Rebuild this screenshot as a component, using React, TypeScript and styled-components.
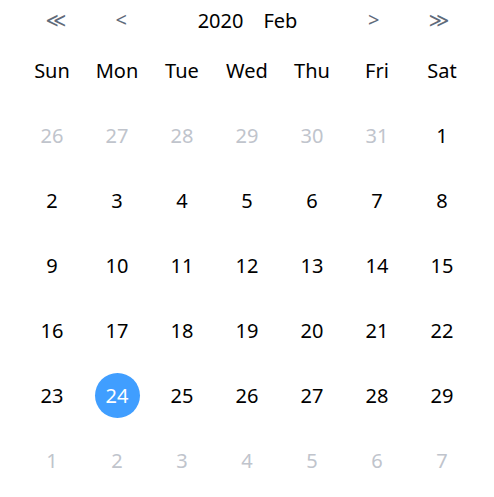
import React from "react";
import styled, { createGlobalStyle } from "styled-components";

const Global = createGlobalStyle`
  html, body { margin: 0; padding: 0; background: #fff; }
  body { font-family: "Noto Sans", "Open Sans", sans-serif; }
`;

const Calendar = styled.div`
  width: 455px;
  margin: 0 auto;
  padding-top: 2px;
`;

const Header = styled.div`
  height: 36px;
  display: flex;
  align-items: center;
  justify-content: space-between;
  padding: 0 25px 0 26px;
`;

const NavGroup = styled.div`
  display: flex;
  align-items: center;
  gap: 49px;
`;

const NavButton = styled.span`
  font-family: "Noto Sans", "DejaVu Sans", sans-serif;
  font-size: 20px;
  color: #5f6b7a;
  cursor: pointer;
  line-height: 1;
`;

const Title = styled.div`
  font-size: 20px;
  color: #000;
  display: flex;
  gap: 20px;
`;

const Grid = styled.div`
  display: grid;
  grid-template-columns: repeat(7, 65px);
  grid-auto-rows: 65px;
`;

const WeekDay = styled.div`
  display: flex;
  align-items: center;
  justify-content: center;
  font-size: 20px;
  color: #000;
`;

const Day = styled.div<{ $muted?: boolean }>`
  display: flex;
  align-items: center;
  justify-content: center;
  font-size: 20px;
  color: ${(p) => (p.$muted ? "#c0c4cc" : "#000")};
`;

const Bubble = styled.span<{ $active?: boolean }>`
  width: 45px;
  height: 45px;
  border-radius: 50%;
  display: flex;
  align-items: center;
  justify-content: center;
  background: ${(p) => (p.$active ? "#409eff" : "transparent")};
  color: ${(p) => (p.$active ? "#fff" : "inherit")};
`;

const weekDays = ["Sun", "Mon", "Tue", "Wed", "Thu", "Fri", "Sat"];

type Cell = { d: number; muted: boolean };
const cells: Cell[] = [];
[26, 27, 28, 29, 30, 31].forEach((d) => cells.push({ d, muted: true }));
for (let d = 1; d <= 29; d++) cells.push({ d, muted: false });
for (let d = 1; d <= 7; d++) cells.push({ d, muted: true });

export default function App() {
  return (
    <>
      <Global />
      <Calendar>
        <Header>
          <NavGroup>
            <NavButton>≪</NavButton>
            <NavButton>&lt;</NavButton>
          </NavGroup>
          <Title>
            <span>2020</span>
            <span>Feb</span>
          </Title>
          <NavGroup>
            <NavButton>&gt;</NavButton>
            <NavButton>≫</NavButton>
          </NavGroup>
        </Header>
        <Grid>
          {weekDays.map((w) => (
            <WeekDay key={w}>{w}</WeekDay>
          ))}
          {cells.map((c, i) => (
            <Day key={i} $muted={c.muted}>
              <Bubble $active={!c.muted && c.d === 24}>{c.d}</Bubble>
            </Day>
          ))}
        </Grid>
      </Calendar>
    </>
  );
}
